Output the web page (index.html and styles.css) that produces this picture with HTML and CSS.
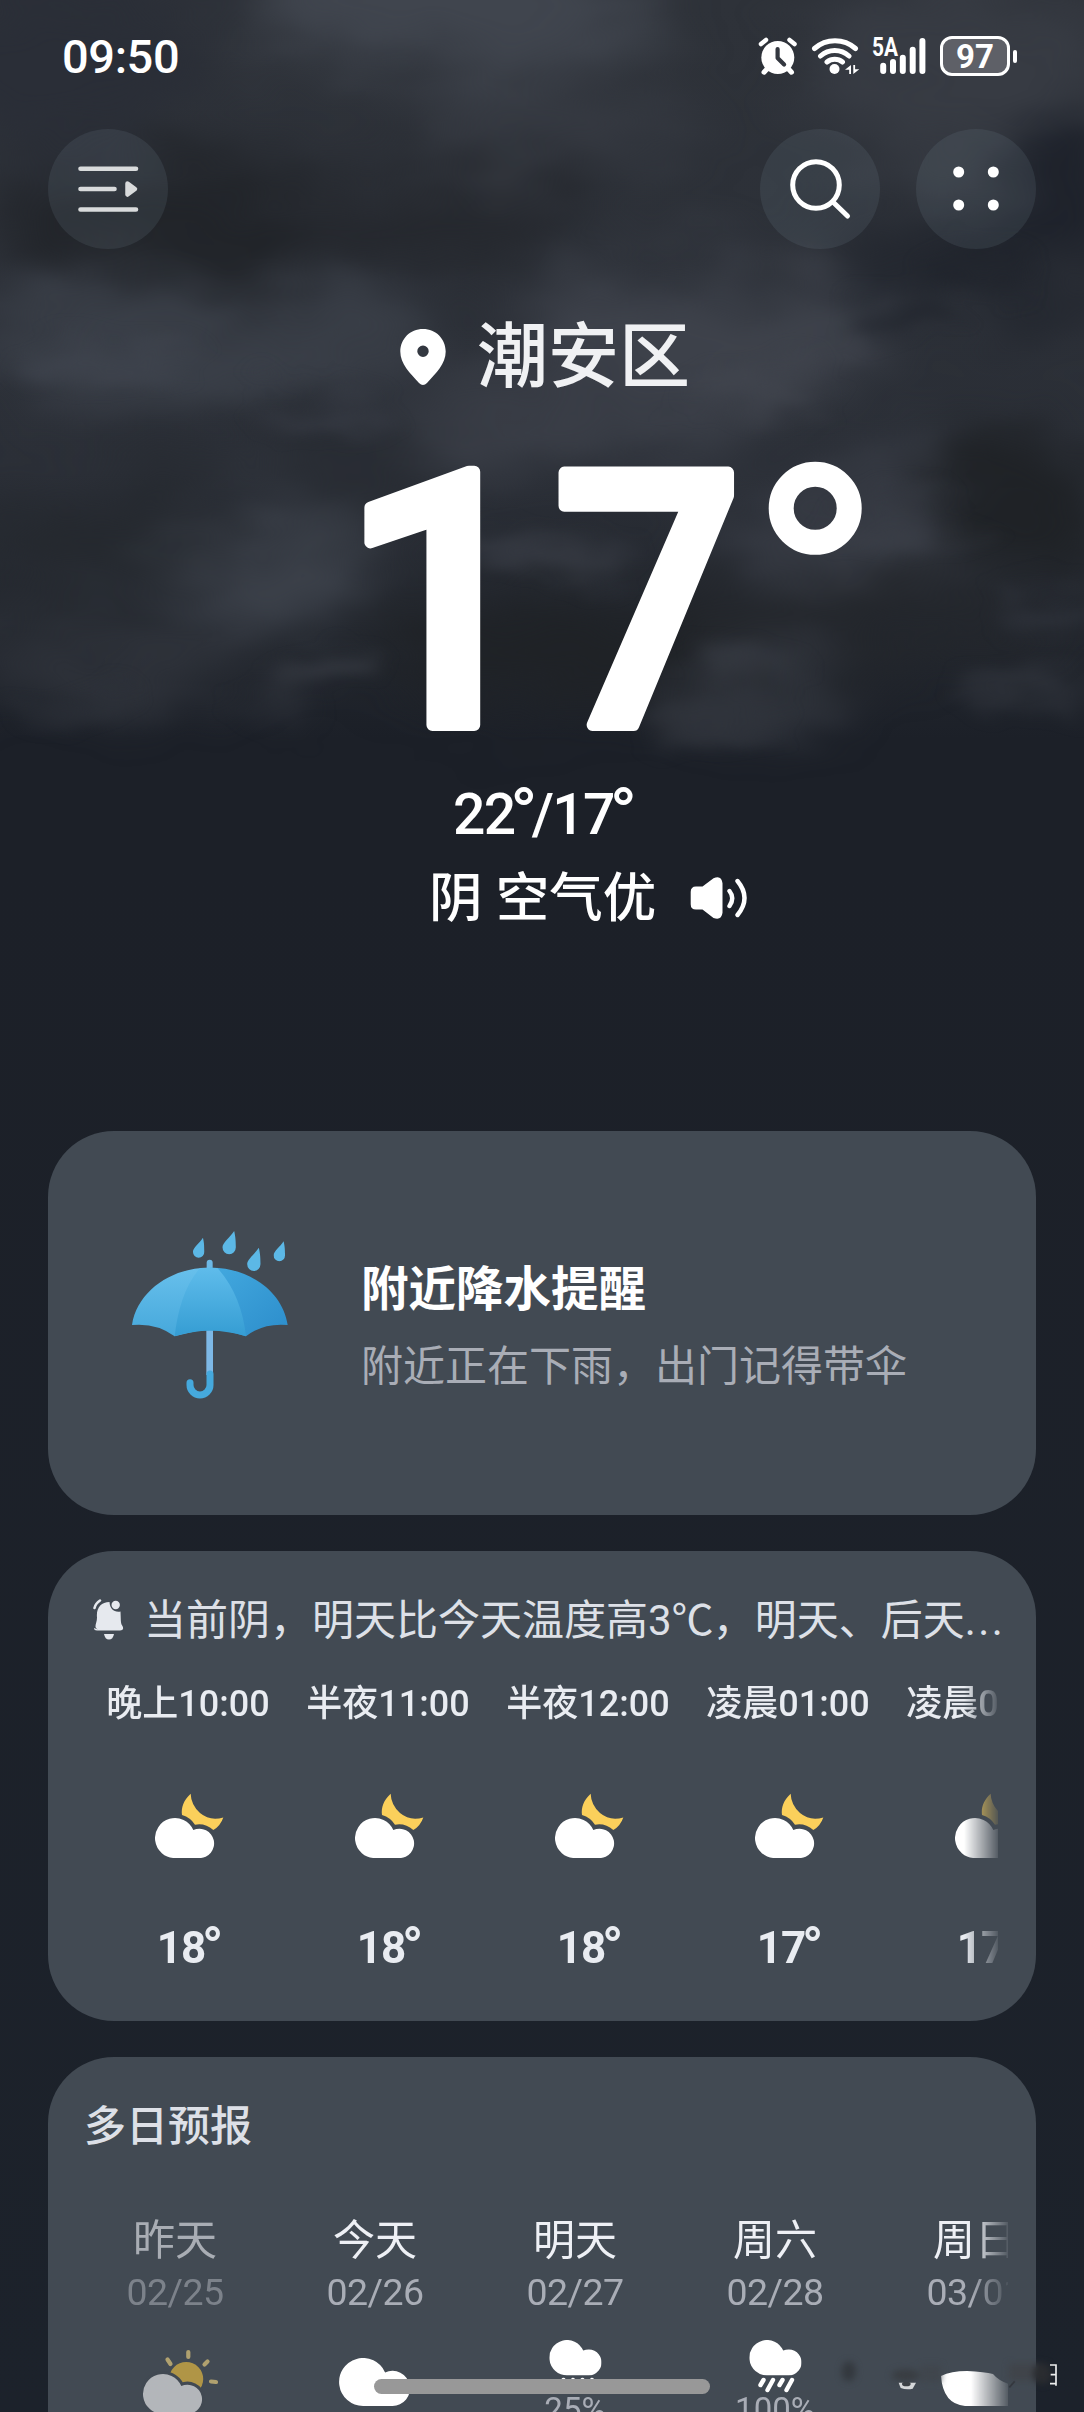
FILE: index.html
```html
<!DOCTYPE html>
<html lang="zh-CN">
<head>
<meta charset="utf-8">
<title>天气</title>
<link rel="stylesheet" href="styles.css">
</head>
<body>
<svg class="defs" width="0" height="0" aria-hidden="true">
  <defs>
    <symbol id="cloud" viewBox="0 0 177 120"><path fill="#fff" d="M60 120A60 60 0 1 1 115 36A44 44 0 1 1 133 120Z"/></symbol>
    <symbol id="cloud-moon" viewBox="0 -75 207 196">
      <path fill="#fbd05b" d="M107 -73C86 -54 78 -32 81 -9Q107 -1 120 20Q150 14 175 36Q197 22 205 -2Q165 10 135 -15Q108 -40 107 -73Z"/>
      <path fill="#fff" d="M60 120A60 60 0 1 1 115 36A44 44 0 1 1 133 120Z"/>
    </symbol>
    <symbol id="drop" viewBox="0 0 42 72"><path fill="#5cb8e6" d="M36 1C39 14 41 26 41 50A20 21 0 0 1 1 50C1 36 24 20 36 1Z"/></symbol>
    <symbol id="rain" viewBox="0 0 200 80">
      <use href="#cloud" x="74.3" y="26" width="52.2" height="35.4"/>
      <path stroke="#fff" stroke-width="4.4" stroke-linecap="round" d="M88.500 66l-3 5M98 66l-5.500 10M107.500 66l-3 5M117 66l-5.500 10"/>
    </symbol>
  </defs>
</svg>

<main class="screen">
  <svg class="sky" viewBox="0 0 1084 860" preserveAspectRatio="none" aria-hidden="true">
    <defs>
      <filter id="soft" filterUnits="userSpaceOnUse" x="-150" y="-150" width="1400" height="1050" color-interpolation-filters="sRGB">
        <feGaussianBlur stdDeviation="28" result="b"/>
        <feTurbulence type="fractalNoise" baseFrequency=".006 .012" numOctaves="3" seed="7"/>
        <feDisplacementMap in="b" scale="110" xChannelSelector="R" yChannelSelector="G"/>
        <feGaussianBlur stdDeviation="5"/>
      </filter>
      <filter id="wisp" filterUnits="userSpaceOnUse" x="-150" y="-150" width="1400" height="1050" color-interpolation-filters="sRGB">
        <feGaussianBlur stdDeviation="12" result="b"/>
        <feTurbulence type="fractalNoise" baseFrequency=".009 .018" numOctaves="3" seed="3"/>
        <feDisplacementMap in="b" scale="80" xChannelSelector="R" yChannelSelector="G"/>
        <feGaussianBlur stdDeviation="4"/>
      </filter>
      <linearGradient id="fade" x1="0" y1="0" x2="0" y2="1">
        <stop offset="0" stop-color="#2e3239"/><stop offset=".55" stop-color="#2b2f37"/>
        <stop offset=".76" stop-color="#22262d"/><stop offset=".86" stop-color="#1c2028"/><stop offset="1" stop-color="#1c2028"/>
      </linearGradient>
    </defs>
    <rect width="1084" height="860" fill="url(#fade)"/>
    <g filter="url(#soft)">
      <ellipse cx="450" cy="0" rx="210" ry="80" fill="#40454e"/>
      <ellipse cx="60" cy="60" rx="150" ry="90" fill="#2a2e37"/>
      <ellipse cx="960" cy="70" rx="160" ry="90" fill="#373b43"/>
      <ellipse cx="560" cy="130" rx="140" ry="50" fill="#353941"/>
      <ellipse cx="190" cy="220" rx="190" ry="60" fill="#212429"/>
      <ellipse cx="430" cy="220" rx="150" ry="50" fill="#25282e"/>
      <ellipse cx="980" cy="260" rx="140" ry="60" fill="#23272f"/>
      <ellipse cx="1060" cy="190" rx="60" ry="70" fill="#1e222b"/>
      <ellipse cx="200" cy="340" rx="230" ry="55" fill="#3a3f48"/>
      <ellipse cx="720" cy="330" rx="200" ry="60" fill="#3e424b"/>
      <ellipse cx="560" cy="420" rx="180" ry="45" fill="#3a3e47"/>
      <ellipse cx="110" cy="540" rx="130" ry="60" fill="#25292f"/>
      <ellipse cx="360" cy="470" rx="90" ry="50" fill="#282c33"/>
      <ellipse cx="280" cy="570" rx="110" ry="60" fill="#3b4049"/>
      <ellipse cx="860" cy="530" rx="160" ry="55" fill="#373b44"/>
      <ellipse cx="1020" cy="500" rx="80" ry="70" fill="#1f2226"/>
      <ellipse cx="570" cy="650" rx="190" ry="50" fill="#1f2226"/>
      <ellipse cx="850" cy="620" rx="180" ry="35" fill="#23262b"/>
      <ellipse cx="120" cy="660" rx="150" ry="35" fill="#30343c"/>
      <ellipse cx="760" cy="690" rx="90" ry="35" fill="#31353d"/>
    </g>
    <g filter="url(#wisp)" opacity=".85">
      <ellipse cx="900" cy="318" rx="60" ry="14" fill="#20242c"/>
      <ellipse cx="980" cy="270" rx="50" ry="12" fill="#1f232b"/>
      <ellipse cx="760" cy="390" rx="70" ry="16" fill="#41454e"/>
      <ellipse cx="110" cy="365" rx="80" ry="16" fill="#3f444e"/>
      <ellipse cx="320" cy="410" rx="60" ry="12" fill="#393d47"/>
      <ellipse cx="550" cy="555" rx="80" ry="16" fill="#3a3e47"/>
      <ellipse cx="900" cy="525" rx="70" ry="14" fill="#3b3f48"/>
      <ellipse cx="330" cy="672" rx="50" ry="14" fill="#393d45"/>
      <ellipse cx="70" cy="700" rx="50" ry="12" fill="#2c3038"/>
      <ellipse cx="280" cy="700" rx="40" ry="10" fill="#2d3139"/>
      <ellipse cx="745" cy="665" rx="40" ry="18" fill="#363a42"/>
      <ellipse cx="710" cy="720" rx="70" ry="16" fill="#31353d"/>
      <ellipse cx="1030" cy="690" rx="60" ry="16" fill="#30343c"/>
      <ellipse cx="1050" cy="610" rx="50" ry="12" fill="#32363f"/>
    </g>
  </svg>

  <header class="status">
    <span class="clock">09:50</span>
    <div class="status-icons">
      <svg width="40" height="38" viewBox="757 37 40 38">
        <circle cx="776.8" cy="57.500" r="16.500" fill="#fff"/>
        <path d="M760 44l5-4M793.500 44l-5-4" stroke="#fff" stroke-width="4.500" stroke-linecap="round"/>
        <path d="M766 69l-3 3.200M787.500 69l3 3.200" stroke="#fff" stroke-width="5" stroke-linecap="round"/>
        <path d="M776.6 49v9l6.500 6.500" fill="none" stroke="#33373f" stroke-width="4.200" stroke-linecap="round" stroke-linejoin="round"/>
      </svg>
      <svg width="49" height="38" viewBox="810 37 49 38" fill="none" stroke="#fff" stroke-width="5" stroke-linecap="round">
        <path d="M813.500 48.500A31 31 0 0 1 854.500 48.500M819.500 56A21.500 21.500 0 0 1 848 56M826 62A12.500 12.500 0 0 1 841.500 62"/>
        <circle cx="833.500" cy="69" r="5" fill="#fff" stroke="none"/>
        <path d="M850 65v9h-1.800v-4.200h-4.200zM852.300 74v-9h1.800v4.200h4.200z" fill="#fff" stroke="none"/>
      </svg>
      <svg width="56" height="38" viewBox="870 37 56 38">
        <text class="net" x="871" y="56" textLength="26" lengthAdjust="spacingAndGlyphs">5A</text>
        <path stroke="#fff" stroke-width="6" stroke-linecap="round" d="M882.200 65.700v5.400M892 62v9.100M901.800 57.800v13.300M911.700 49.800v21.300M921.400 41v30.100"/>
      </svg>
      <div class="battery"><span>97</span></div><i class="battery-tip"></i>
    </div>
  </header>

  <nav class="toolbar">
    <div class="round">
      <svg width="120" height="120" viewBox="48 129 120 120">
        <path d="M80.500 168.700h55.500M80.500 189h34M80.500 209.500h55.500" stroke="#d9dbdc" stroke-width="4.600" stroke-linecap="round"/>
        <path d="M127.500 183.500l7.500 5.500-7.500 5.500z" fill="#d9dbdc" stroke="#d9dbdc" stroke-width="4.500" stroke-linejoin="round"/>
      </svg>
    </div>
    <div class="round right">
      <svg width="120" height="120" viewBox="760 129 120 120" fill="none" stroke="#fff" stroke-width="5" stroke-linecap="round">
        <circle cx="816" cy="185" r="23.300"/><path d="M833.500 202.500l14 13.500"/>
      </svg>
    </div>
    <div class="round">
      <svg width="120" height="120" viewBox="916 129 120 120" fill="#fff">
        <circle cx="958.700" cy="172" r="5.500"/><circle cx="993.300" cy="172" r="5.500"/><circle cx="958.700" cy="205" r="5.500"/><circle cx="993.300" cy="205" r="5.500"/>
      </svg>
    </div>
  </nav>

  <section class="current">
    <div class="place">
      <svg width="46" height="58" viewBox="400 328 46 58"><path fill="#fff" fill-rule="evenodd" d="M423 329C436 329 445.700 339 445.700 351.500C445.700 364 436 373 427 383Q423 387 419 383C410 373 400.300 364 400.300 351.500C400.300 339 410 329 423 329ZM423 345.500a5.700 5.700 0 1 0 0 11.400a5.700 5.700 0 1 0 0-11.400Z"/></svg>
      <h1>潮安区</h1>
    </div>
    <svg class="temp" width="1084" height="369" viewBox="0 391 1084 369">
      <text x="341" y="725" class="big">1</text>
      <text transform="translate(553 725) scale(.94 1)" class="big">7</text>
      <circle cx="815.200" cy="508.300" r="34" fill="none" stroke="#fff" stroke-width="25"/>
    </svg>
    <p class="range">22<i class="deg">°</i>/17<i class="deg">°</i></p>
    <div class="sky-text"><span>阴 空气优</span>
      <svg width="58" height="44" viewBox="690 875 58 44">
        <path fill="#fff" d="M696 885.500h6.500l11-8.300q8-3.500 9 5v29.500q-1 8-9 5.200l-11-8.400H696q-5.300 0-5.300-5.300V891q0-5.500 5.300-5.500Z"/>
        <path fill="none" stroke="#fff" stroke-width="4.400" stroke-linecap="round" d="M729.500 890q5.500 7 0 15M737.500 880q14 17 0 34"/>
      </svg>
    </div>
  </section>

  <section class="card alert">
    <svg class="umbrella" width="200" height="210" viewBox="0 0 600 630" aria-hidden="true">
      <defs>
        <linearGradient id="u1" x1="0" y1="0" x2="0" y2="1"><stop offset="0" stop-color="#68c0ec"/><stop offset="1" stop-color="#46a8db"/></linearGradient>
        <linearGradient id="u2" x1="0" y1="0" x2="0" y2="1"><stop offset="0" stop-color="#5fbceb"/><stop offset="1" stop-color="#359dd3"/></linearGradient>
        <linearGradient id="u3" x1="0" y1="0" x2="1" y2="1"><stop offset="0" stop-color="#43a9df"/><stop offset="1" stop-color="#2c8dcb"/></linearGradient>
      </defs>
      <path d="M299 345V495" stroke="#7db8e6" stroke-width="20"/>
      <path d="M300 492V525A30 30 0 0 1 240 525V518" fill="none" stroke="#45a9dd" stroke-width="21" stroke-linecap="round"/>
      <path d="M299 158V190" stroke="#6db9e6" stroke-width="18" stroke-linecap="round"/>
      <path fill="url(#u1)" d="M300 173C190 171 82 240 66 345Q140 338 194 379L260 363Z"/>
      <path fill="url(#u3)" d="M300 173C410 171 518 240 533 345Q460 338 408 379L350 363Z"/>
      <path fill="url(#u2)" d="M270 174Q300 172 322 174C370 225 400 300 408 379Q300 346 194 379C203 300 225 225 270 174Z"/>
      <use href="#drop" x="248" y="82" width="36" height="62"/>
      <use href="#drop" x="336" y="62" width="43" height="72"/>
      <use href="#drop" x="410" y="112" width="43" height="72"/>
      <use href="#drop" x="490" y="93" width="36" height="62"/>
    </svg>
    <div class="alert-text">
      <h2>附近降水提醒</h2>
      <p>附近正在下雨，出门记得带伞</p>
    </div>
  </section>

  <section class="card hourly">
    <div class="summary">
      <svg width="32" height="42" viewBox="92 1596 32 42">
        <path fill="#e6e9ee" d="M98 1627.500C93 1625 97 1622 97 1615.500C96 1606 101 1600 109.500 1600C110 1607 114 1610.500 120.500 1609.500C121 1620 120.500 1621 122.500 1624Q124.500 1628 120 1628.500H97Q94 1628.500 94 1626ZM104 1632h10q-1 5.500-5 5.500t-5-5.500Z"/>
        <circle cx="115.700" cy="1603" r="4.200" fill="#e6e9ee"/>
        <path d="M100 1598.500q-4.500 3-5.500 7.500" fill="none" stroke="#e6e9ee" stroke-width="2.600" stroke-linecap="round"/>
      </svg>
      <p>当前阴，明天比今天温度高3<span class="unit">℃</span>，明天、后天<span class="dots">...</span></p>
    </div>
    <div class="hours">
      <div class="hour"><time>晚上10:00</time><svg><use href="#cloud-moon"/></svg><b>18<i class="deg">°</i></b></div>
      <div class="hour"><time>半夜11:00</time><svg><use href="#cloud-moon"/></svg><b>18<i class="deg">°</i></b></div>
      <div class="hour"><time>半夜12:00</time><svg><use href="#cloud-moon"/></svg><b>18<i class="deg">°</i></b></div>
      <div class="hour"><time>凌晨01:00</time><svg><use href="#cloud-moon"/></svg><b>17<i class="deg">°</i></b></div>
      <div class="hour"><time>凌晨02:00</time><svg><use href="#cloud-moon"/></svg><b>17<i class="deg">°</i></b></div>
    </div>
  </section>

  <section class="card daily">
    <h3>多日预报</h3>
    <div class="days">
      <div class="day past"><span>昨天</span><time>02/25</time>
        <svg viewBox="0 0 200 98" height="98">
          <circle cx="111.200" cy="65" r="17" fill="#fbc93f"/>
          <path stroke="#fbdc83" stroke-width="4.200" stroke-linecap="round" d="M113.300 38v5M92.500 45.500l3 4.500M129.500 50.500l3-3M136 67.500l5 .5"/>
          <path fill="#fff" stroke="#424a53" stroke-width="18" paint-order="stroke" transform="translate(68 60) scale(.333)" d="M60 120A60 60 0 1 1 115 36A44 44 0 1 1 133 120Z"/>
        </svg>
      </div>
      <div class="day"><span>今天</span><time>02/26</time><svg viewBox="0 0 200 98" height="98"><use href="#cloud" x="64" y="44" width="71" height="48"/></svg></div>
      <div class="day"><span>明天</span><time>02/27</time><svg viewBox="0 0 200 80" height="80"><use href="#rain"/></svg><em>25%</em></div>
      <div class="day"><span>周六</span><time>02/28</time><svg viewBox="0 0 200 80" height="80"><use href="#rain"/></svg><em>100%</em></div>
      <div class="day"><span>周日</span><time>03/01</time><svg viewBox="0 0 200 98" height="98"><path fill="#fff" d="M66 62Q76 57 92 57Q110 58 118 60Q124 67 134 70V92H90Q68 90 66 62Z"/></svg></div>
    </div>
  </section>

  <svg class="mark" width="260" height="80" viewBox="0 0 780 240" aria-hidden="true">
    <defs><filter id="smudge" x="-50%" y="-50%" width="200%" height="200%" color-interpolation-filters="sRGB"><feGaussianBlur stdDeviation="9"/></filter></defs>
    <g filter="url(#smudge)">
      <ellipse cx="74" cy="118" rx="22" ry="30" fill="#34393f"/>
      <ellipse cx="245" cy="130" rx="42" ry="18" fill="#393d42"/>
      <rect x="290" y="100" width="60" height="50" fill="#40464d"/>
      <rect x="555" y="95" width="95" height="50" fill="#40444a"/>
      <ellipse cx="655" cy="125" rx="28" ry="32" fill="#2a2c30"/>
    </g>
    <path d="M224 152H276L266 170Q248 175 230 168Z" fill="#d5d7d9"/>
    <ellipse cx="247" cy="156" rx="13" ry="7" fill="#3d4146"/>
    <path d="M556 166L572 148" stroke="#34383e" stroke-width="5"/>
    <path d="M678 99H696V161M680 128H696M678 155H696" fill="none" stroke="#eceded" stroke-width="5"/>
  </svg>
  <i class="home-bar"></i>
</main>
</body>
</html>
```
FILE: styles.css
```css
* { box-sizing: border-box; margin: 0; padding: 0; }
body {
  background: #1c2129;
  color: #fff;
  font-family: Roboto, "Noto Sans CJK SC", sans-serif;
}
.defs { position: absolute; }
svg { display: block; flex: none; }
.screen {
  position: relative;
  width: 1084px;
  height: 2412px;
  overflow: hidden;
  background: linear-gradient(#1c2028 36%, #1c222b);
}
.sky { position: absolute; inset: 0 0 auto; width: 1084px; height: 860px; z-index: 0; }
.status, .toolbar, .current, .card { position: relative; }
.deg { margin: 0 -.06em; font-size: 1.25em; font-style: normal; line-height: 0; vertical-align: -.05em; }

.status {
  display: flex;
  align-items: center;
  justify-content: space-between;
  height: 112px;
  padding: 0 67px 0 62px;
}
.clock { padding-top: 2px; font-size: 47px; font-weight: 500; line-height: 60px; letter-spacing: -.4px; }
.status-icons { display: flex; align-items: center; }
.status-icons svg:nth-child(2) { margin-left: 13px; }
.status-icons svg:nth-child(3) { margin: 0 13px 0 11px; overflow: visible; }
.net { font: 700 25px Roboto, sans-serif; fill: #fff; }
.battery {
  display: flex;
  align-items: center;
  justify-content: center;
  width: 70px;
  height: 40px;
  border: 3px solid #fff;
  border-radius: 12px;
  background: #5e6067;
  font-size: 33px;
  font-weight: 700;
  line-height: 34px;
}
.battery span { padding-top: 2px; }
.battery-tip { width: 4px; height: 13px; margin-left: 3px; border-radius: 2px; background: #fff; }

.toolbar { display: flex; gap: 36px; margin-top: 17px; padding: 0 48px; }
.round { width: 120px; height: 120px; border-radius: 50%; background: rgba(120, 138, 150, .16); }
.round.right { margin-left: auto; }

.current { height: 846px; margin-bottom: 36px; padding-top: 70px; }
.place { display: flex; align-items: center; gap: 31px; height: 72px; padding-left: 400px; }
.place h1 { padding-top: 4px; font-size: 71px; font-weight: 500; line-height: 72px; color: #f0f1f3; }
.place svg { margin-top: 4px; }
.big { font: 500 355px Roboto, sans-serif; fill: #fff; stroke: #fff; stroke-width: 12px; stroke-linejoin: round; }
.range { height: 80px; margin-top: 14px; padding-top: 1px; font-size: 57px; font-weight: 500; line-height: 80px; letter-spacing: -1.6px; text-align: center; }
.sky-text { display: flex; align-items: center; gap: 34px; height: 68px; margin-top: 10px; padding-left: 429px; font-size: 53.500px; font-weight: 500; line-height: 68px; }
.sky-text span { padding-top: 2px; }

.card { width: 988px; margin: 0 48px 36px; border-radius: 66px; background: #424a53; overflow: hidden; }
.alert { display: flex; align-items: center; gap: 51px; height: 384px; padding-left: 62px; }
.umbrella { margin-top: -16px; }
.alert-text { display: flex; flex-direction: column; gap: 22px; padding-top: 5px; }
.alert h2 { font-size: 47.500px; font-weight: 700; line-height: 60px; }
.alert p { font-size: 42px; line-height: 50px; color: #a9adb6; }

.hourly { height: 470px; padding: 38px 0 0 40px; }
.summary { display: flex; align-items: center; gap: 20px; height: 60px; padding-left: 4px; font-size: 42px; line-height: 60px; color: #dde0e7; white-space: nowrap; }
.unit { font-family: "Noto Sans CJK SC", sans-serif; letter-spacing: -1px; }
.dots { letter-spacing: 2.500px; }
.hours { display: flex; width: 910px; margin-top: 33px; overflow: hidden; -webkit-mask-image: linear-gradient(90deg, #000 876px, rgba(0, 0, 0, .1) 910px); mask-image: linear-gradient(90deg, #000 876px, rgba(0, 0, 0, .1) 910px); }
.hour { display: flex; flex: 0 0 200px; flex-direction: column; align-items: center; color: #e9ecf1; }
.hour time { font-size: 36px; font-weight: 500; line-height: 44px; white-space: nowrap; }
.hour svg { width: 69px; height: 65.500px; margin: 66.500px 0 65px 3px; }
.hour b { font-size: 44px; font-weight: 700; line-height: 50px; letter-spacing: -1px; }

.daily { height: 480px; padding: 42px 0 0 27px; }
.daily h3 { padding-left: 9px; font-size: 42px; font-weight: 500; line-height: 56px; color: #dde0e7; }
.days { display: flex; width: 933px; margin-top: 58px; overflow: hidden; -webkit-mask-image: linear-gradient(90deg, #000 896px, rgba(0, 0, 0, .1) 933px); mask-image: linear-gradient(90deg, #000 896px, rgba(0, 0, 0, .1) 933px); }
.day { display: flex; flex: 0 0 200px; flex-direction: column; align-items: center; }
.day span { font-size: 42px; line-height: 56px; color: #eef0f5; }
.day time { margin-top: 1px; font-size: 37.500px; line-height: 44px; letter-spacing: -.6px; color: #a9adb6; }
.day svg { width: 200px; }
.day em { font-size: 33px; font-style: normal; line-height: 32px; color: #a9adb6; }
.past { opacity: .6; }
.past time { opacity: .95; }

.mark { position: absolute; left: 824px; top: 2332px; }
.home-bar { position: absolute; left: 374px; top: 2379px; width: 336px; height: 15px; border-radius: 8px; background: #989898; }
```
